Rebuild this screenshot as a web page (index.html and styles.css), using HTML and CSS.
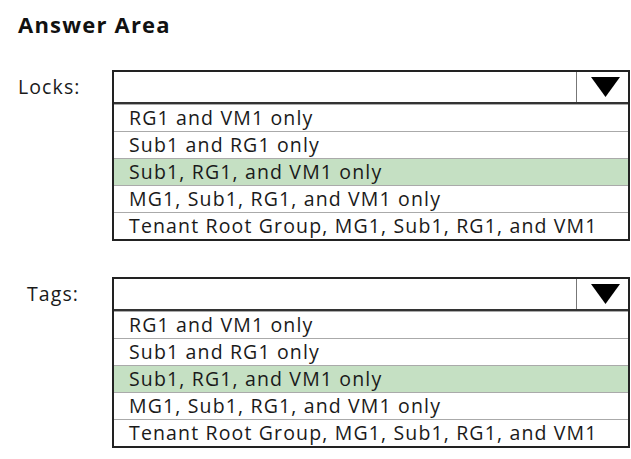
FILE: index.html
```html
<!DOCTYPE html>
<html lang="en">
<head>
    <meta charset="UTF-8" />
    <title>Answer Area</title>
    <link rel="stylesheet" href="styles.css">
</head>
<body>
    <h2 class="title">Answer Area</h2>

    <div class="question">
        <div class="label">Locks:</div>
        <div class="dropdown">
            <div class="dropdown-head">
                <div class="dropdown-value"></div>
                <div class="dropdown-arrow">
                    <svg width="29" height="20" viewBox="0 0 29 20"><polygon points="0,0 29,0 14.5,20" fill="#000"/></svg>
                </div>
            </div>
            <div class="option">RG1 and VM1 only</div>
            <div class="option">Sub1 and RG1 only</div>
            <div class="option selected">Sub1, RG1, and VM1 only</div>
            <div class="option">MG1, Sub1, RG1, and VM1 only</div>
            <div class="option">Tenant Root Group, MG1, Sub1, RG1, and VM1</div>
        </div>
    </div>

    <div class="question tags">
        <div class="label">Tags:</div>
        <div class="dropdown">
            <div class="dropdown-head">
                <div class="dropdown-value"></div>
                <div class="dropdown-arrow">
                    <svg width="29" height="20" viewBox="0 0 29 20"><polygon points="0,0 29,0 14.5,20" fill="#000"/></svg>
                </div>
            </div>
            <div class="option">RG1 and VM1 only</div>
            <div class="option">Sub1 and RG1 only</div>
            <div class="option selected">Sub1, RG1, and VM1 only</div>
            <div class="option">MG1, Sub1, RG1, and VM1 only</div>
            <div class="option">Tenant Root Group, MG1, Sub1, RG1, and VM1</div>
        </div>
    </div>
</body>
</html>
```

FILE: styles.css
```css
body {
    font-family: "Open Sans", Arial, sans-serif;
    margin: 0;
    padding: 9px 0 0 18px;
    background-color: #fff;
    color: #1a1a1a;
}
.title {
    font-size: 22px;
    font-weight: bold;
    letter-spacing: 1.2px;
    line-height: 30px;
    margin: 0 0 31px 0;
    color: #111;
}
.question {
    display: flex;
    align-items: flex-start;
}
.question.tags {
    margin-top: 36px;
}
.label {
    width: 94px;
    font-size: 19.5px;
    letter-spacing: 1.1px;
    line-height: 32px;
    padding-top: 1px;
}
.tags .label {
    padding-left: 9px;
    width: 85px;
}
.dropdown {
    width: 514px;
    border: 2px solid #222;
}
.dropdown-head {
    display: flex;
    height: 30px;
    border-bottom: 2px solid #333;
}
.dropdown-value {
    flex: 1;
}
.dropdown-arrow {
    width: 52px;
    border-left: 1px solid #777;
    display: flex;
    align-items: center;
    justify-content: center;
    padding-left: 6px;
    box-sizing: border-box;
}
.option {
    height: 26px;
    line-height: 26px;
    padding-left: 15px;
    font-size: 19.5px;
    letter-spacing: 1.15px;
    border-top: 1px solid #aaa;
}
.option:first-of-type {
    border-top: none;
}
.option.selected {
    background-color: #c5e0c3;
}
```
